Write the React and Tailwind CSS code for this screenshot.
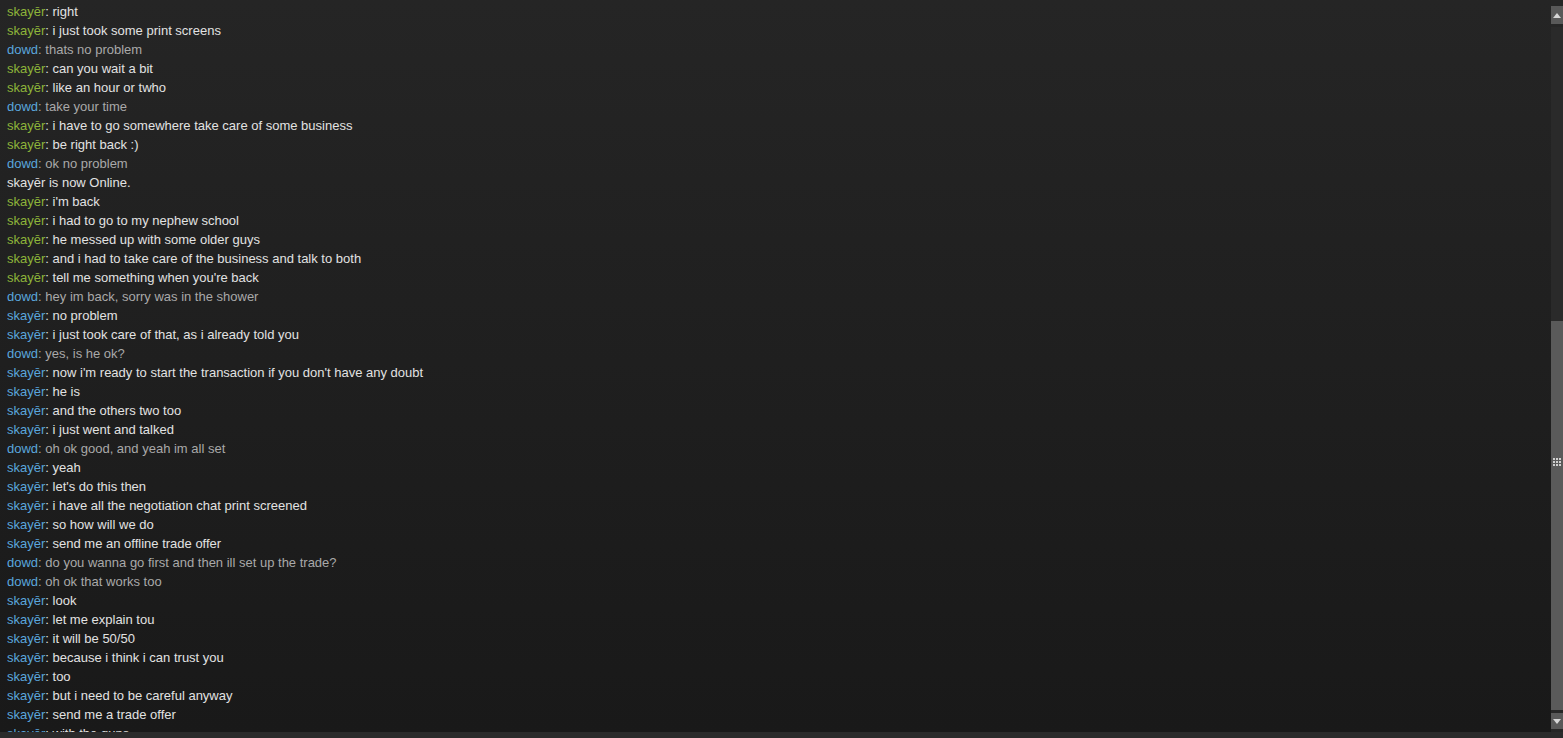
// Steam-style chat log with a custom scrollbar on the right.
const GREEN = "g";
const BLUE = "b";
const ME = "d";
const SYS = "s";

const lines = [
  [GREEN, "right"],
  [GREEN, "i just took some print screens"],
  [ME, "thats no problem"],
  [GREEN, "can you wait a bit"],
  [GREEN, "like an hour or twho"],
  [ME, "take your time"],
  [GREEN, "i have to go somewhere take care of some business"],
  [GREEN, "be right back :)"],
  [ME, "ok no problem"],
  [SYS, "skayēr is now Online."],
  [GREEN, "i'm back"],
  [GREEN, "i had to go to my nephew school"],
  [GREEN, "he messed up with some older guys"],
  [GREEN, "and i had to take care of the business and talk to both"],
  [GREEN, "tell me something when you're back"],
  [ME, "hey im back, sorry was in the shower"],
  [BLUE, "no problem"],
  [BLUE, "i just took care of that, as i already told you"],
  [ME, "yes, is he ok?"],
  [BLUE, "now i'm ready to start the transaction if you don't have any doubt"],
  [BLUE, "he is"],
  [BLUE, "and the others two too"],
  [BLUE, "i just went and talked"],
  [ME, "oh ok good, and yeah im all set"],
  [BLUE, "yeah"],
  [BLUE, "let's do this then"],
  [BLUE, "i have all the negotiation chat print screened"],
  [BLUE, "so how will we do"],
  [BLUE, "send me an offline trade offer"],
  [ME, "do you wanna go first and then ill set up the trade?"],
  [ME, "oh ok that works too"],
  [BLUE, "look"],
  [BLUE, "let me explain tou"],
  [BLUE, "it will be 50/50"],
  [BLUE, "because i think i can trust you"],
  [BLUE, "too"],
  [BLUE, "but i need to be careful anyway"],
  [BLUE, "send me a trade offer"],
  [BLUE, "with the guns"],
];

function Line({ kind, text }) {
  if (kind === SYS) {
    return <div className="h-[19px] leading-[19px] text-[#e2e2e2]">{text}</div>;
  }
  if (kind === ME) {
    return (
      <div className="h-[19px] leading-[19px] text-[#a9a9a9]">
        <span className="text-[#5aa6dc]">dowd</span>: {text}
      </div>
    );
  }
  return (
    <div className="h-[19px] leading-[19px] text-[#e2e2e2]">
      <span className={kind === GREEN ? "text-[#8db43a]" : "text-[#5aa6dc]"}>skayēr</span>: {text}
    </div>
  );
}

function Arrow({ up }) {
  return (
    <svg width="8" height="5" viewBox="0 0 8 5">
      <polygon points={up ? "4,0 8,5 0,5" : "0,0 8,0 4,5"} fill="#d6d6d6" />
    </svg>
  );
}

function Scrollbar() {
  return (
    <div className="w-[12px] flex flex-col bg-[#262626] pt-[6px] pb-[3px] gap-[3px]">
      <div className="h-[18px] bg-[#595959] flex items-center justify-center">
        <Arrow up />
      </div>
      <div className="flex-1 flex flex-col bg-[#2a2a2a]">
        <div className="h-[294px]" />
        <div className="flex-1 bg-[#5a5a5a] flex flex-col items-center pt-[137px]">
          <div className="grid grid-cols-3 gap-[1px]">
            {Array.from({ length: 9 }).map((_, i) => (
              <div key={i} className="w-[2px] h-[2px] bg-[#cfcfcf]" />
            ))}
          </div>
        </div>
      </div>
      <div className="h-[16px] bg-[#595959] flex items-center justify-center">
        <Arrow />
      </div>
    </div>
  );
}

export default function App() {
  return (
    <div className="w-[1563px] h-[738px] flex flex-col overflow-hidden font-['Liberation_Sans',Arial,sans-serif] text-[13px]">
      <div className="flex-1 flex min-h-0">
        <div className="flex-1 overflow-hidden bg-gradient-to-b from-[#252525] to-[#191919] pl-[7px] pt-[2px]">
          {lines.map(([kind, text], i) => (
            <Line key={i} kind={kind} text={text} />
          ))}
        </div>
        <Scrollbar />
      </div>
      <div className="h-[6px] bg-[#2b2b2b]" />
    </div>
  );
}
